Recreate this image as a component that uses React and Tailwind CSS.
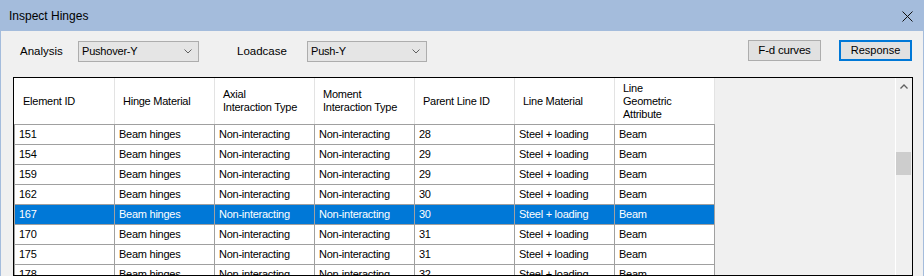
import React from "react";

const rows = [
  ["151", "28"],
  ["154", "29"],
  ["159", "29"],
  ["162", "30"],
  ["167", "30", true],
  ["170", "31"],
  ["175", "31"],
  ["178", "32"],
  ["181", "32"],
];

function Chevron({ up = false }) {
  return (
    <svg width="8" height="5" viewBox="0 0 8 5" className="block">
      {up ? (
        <polyline points="0.5,4.5 4,1 7.5,4.5" fill="none" stroke="#606060" strokeWidth="1.3" />
      ) : (
        <polyline points="0.5,0.5 4,4 7.5,0.5" fill="none" stroke="#606060" strokeWidth="1" />
      )}
    </svg>
  );
}

function Combo({ value, w }) {
  return (
    <div className={`${w} h-[21px] mt-[1px] border border-[#adadad] bg-[#e5e5e5] flex items-center justify-between pl-[3px] pr-[6px] text-[11px] tracking-[-0.2px]`}>
      <span>{value}</span>
      <Chevron />
    </div>
  );
}

const headers = [
  ["Element ID"],
  ["Hinge Material"],
  ["Axial", "Interaction Type"],
  ["Moment", "Interaction Type"],
  ["Parent Line ID"],
  ["Line Material"],
  ["Line", "Geometric", "Attribute"],
];

export default function App() {
  return (
    <div className="w-[924px] h-[276px] overflow-hidden flex flex-col bg-[#f0f0f0] border-x border-[#a4bcdc] font-['Liberation_Sans',Arial,sans-serif] text-black">
      <div className="h-[31px] shrink-0 bg-[#a4bcdc] flex items-center justify-between pl-[8px] pr-[10px] text-[12px]">
        <span>Inspect Hinges</span>
        <svg width="11" height="11" viewBox="0 0 11 11" className="mt-[1px]">
          <line x1="0.5" y1="0.5" x2="10.5" y2="10.5" stroke="#111" strokeWidth="1" />
          <line x1="10.5" y1="0.5" x2="0.5" y2="10.5" stroke="#111" strokeWidth="1" />
        </svg>
      </div>

      <div className="h-[46px] shrink-0 flex items-start pt-[9px] pl-[19px] pr-[11px]">
        <div className="w-[58px] h-[22px] mt-[1px] flex items-center text-[11.5px]">Analysis</div>
        <Combo value="Pushover-Y" w="w-[121px]" />
        <div className="ml-[38px] w-[70px] h-[22px] mt-[1px] flex items-center text-[11.5px]">Loadcase</div>
        <Combo value="Push-Y" w="w-[120px]" />
        <div className="flex-1" />
        <div className="w-[73px] h-[21px] border border-[#adadad] bg-[#e1e1e1] flex items-center justify-center text-[11.5px] tracking-[-0.2px]">
          F-d curves
        </div>
        <div className="ml-[18px] w-[73px] h-[21px] border-2 border-[#0078d7] bg-[#e1e1e1] flex items-center justify-center text-[11px]">
          Response
        </div>
      </div>

      <div className="ml-[12px] w-[900px] flex-1 border border-black bg-[#f0f0f0] flex overflow-hidden">
        <div className="flex-1 overflow-hidden">
          <div className="w-fit text-[11px] tracking-[-0.25px]">
            <div className="flex h-[47px] border-b border-[#a0a0a0] bg-white">
              {headers.map((h, i) => (
                <div
                  key={i}
                  className={`${i === 6 ? "w-[101px] border-r" : "w-[100px]"} border-l ${i === 0 ? "border-l-white" : "border-l-[#e3e3e3]"} border-r-[#e3e3e3] flex flex-col justify-center pl-[8px] leading-[13px]`}
                >
                  {h.map((t, j) => (
                    <span key={j} className="whitespace-nowrap">{t}</span>
                  ))}
                </div>
              ))}
            </div>
            {rows.map(([id, parent, sel], r) => {
              const vals = [id, "Beam hinges", "Non-interacting", "Non-interacting", parent, "Steel + loading", "Beam"];
              return (
                <div
                  key={r}
                  className={`flex h-[20px] border-b border-[#a0a0a0] ${sel ? "bg-[#0078d7] text-white" : "bg-white"}`}
                >
                  {vals.map((v, i) => (
                    <div
                      key={i}
                      className={`${i === 6 ? "w-[101px] border-r" : "w-[100px]"} border-l border-[#a0a0a0] flex items-center pl-[4px] whitespace-nowrap`}
                    >
                      {v}
                    </div>
                  ))}
                </div>
              );
            })}
          </div>
        </div>
        <div className="w-[17px] shrink-0 border-l border-white bg-[#f0f0f0] flex flex-col">
          <div className="h-[17px] flex items-center justify-center">
            <Chevron up />
          </div>
          <div className="mt-[57px] w-[15px] h-[23px] bg-[#cdcdcd]" />
        </div>
      </div>
    </div>
  );
}
